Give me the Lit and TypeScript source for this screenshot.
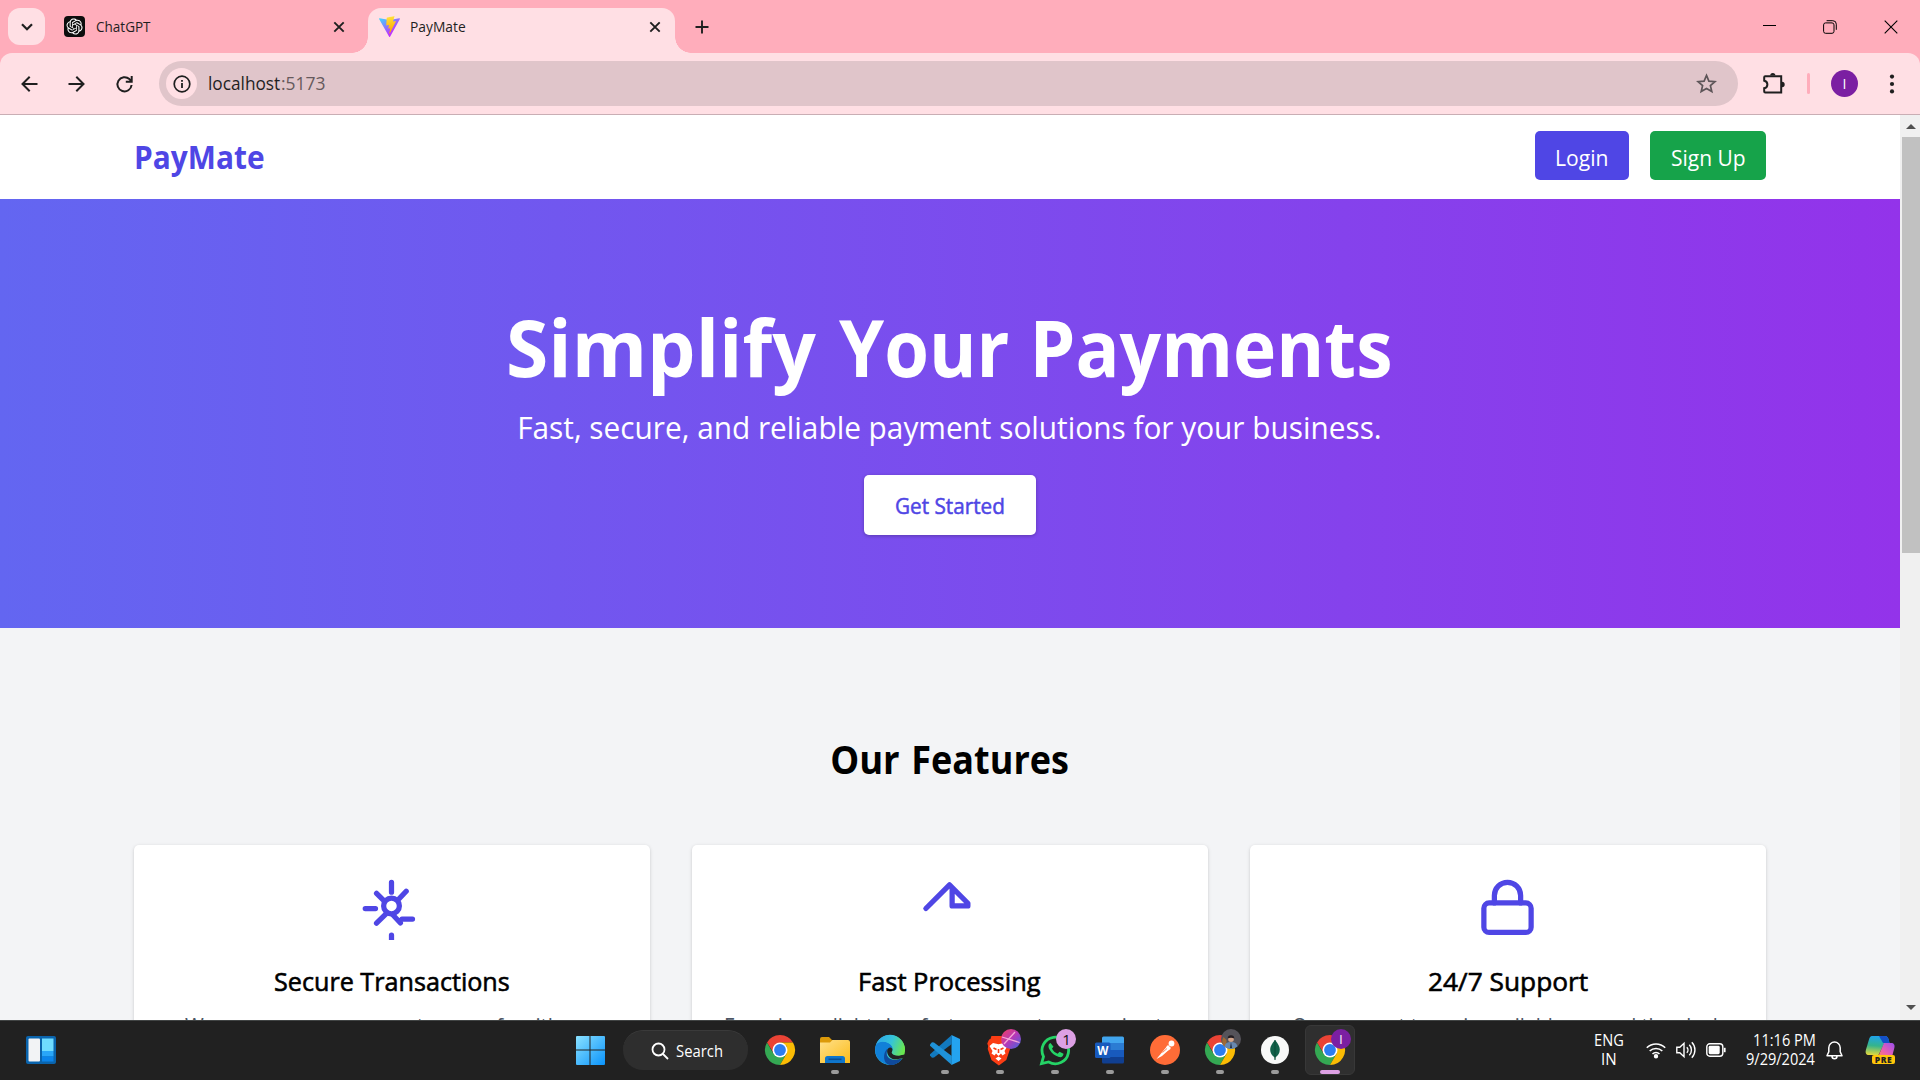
import { LitElement, html, css, svg } from "lit";
import { customElement, property } from "lit/decorators.js";

/** One line of text whose glyphs are scaled horizontally to span a given width. */
@customElement("fit-text")
class FitText extends LitElement {
  @property({ type: Number }) w = 0;
  @property() text = "";
  static styles = css`
    :host { display: inline-block; white-space: nowrap; text-align: left; flex: none; }
    .t { display: block; width: max-content; transform-origin: 0 50%; }
  `;
  firstUpdated() {
    const el = this.renderRoot.querySelector(".t") as HTMLElement;
    const cs = getComputedStyle(el);
    const ctx = document.createElement("canvas").getContext("2d")!;
    ctx.font = `${cs.fontWeight} ${cs.fontSize} ${cs.fontFamily}`;
    const m = ctx.measureText(this.text);
    const ink = m.actualBoundingBoxRight + m.actualBoundingBoxLeft;
    this.style.width = `${this.w}px`;
    el.style.transform = `scaleX(${this.w / ink}) translateX(${m.actualBoundingBoxLeft}px)`;
  }
  render() {
    return html`<span class="t">${this.text}</span>`;
  }
}

const base = css`
  :host { display: block; font-family: "Open Sans", "Noto Sans", sans-serif; }
  * { box-sizing: border-box; }
  svg { display: block; flex: none; }
`;

const closeIcon = html`<svg width="12" height="12" viewBox="0 0 12 12" stroke="#1f1f1f" stroke-width="1.9"><path d="M1.3 1.3l9.4 9.4M10.7 1.3l-9.4 9.4"/></svg>`;

@customElement("browser-chrome")
class BrowserChrome extends LitElement {
  static styles = [base, css`
    :host { background: #ffadbb; color: #1f1f1f; }
    .strip { height: 53px; display: flex; align-items: flex-start; padding: 8px 0 0 8px; }
    .search { width: 37px; height: 37px; border-radius: 12px; background: #ffdfe4; display: grid; place-items: center; }
    .tab { height: 37px; display: flex; align-items: center; font-size: 14.6px; }
    .tab.idle { width: 323px; padding: 0 23px 0 19px; }
    .tab.active { width: 307px; height: 45px; padding: 0 14.5px 8px 11px; background: #ffdfe4; border-radius: 13px 13px 0 0; position: relative; }
    .tab.active::before, .tab.active::after { content: ""; position: absolute; bottom: 0; width: 16px; height: 16px; }
    .tab.active::before { left: -16px; background: radial-gradient(circle at 0 0, transparent 15.5px, #ffdfe4 16px); }
    .tab.active::after { right: -16px; background: radial-gradient(circle at 100% 0, transparent 15.5px, #ffdfe4 16px); }
    .tab .name { margin-left: 11px; flex: 1; padding-bottom: 2px; }
    .plus { margin: 12px 0 0 20px; }
    .win { margin-left: auto; display: flex; align-items: center; height: 37px; gap: 47px; padding-right: 22px; }
    .bar { height: 61px; background: #ffdfe4; border-radius: 12px 12px 0 0; display: flex; align-items: center; padding: 0 20px; }
    .line { height: 1px; background: #c9aeb4; }
    .nav { display: flex; gap: 27px; width: 139px; }
    .omni { width: 1579px; height: 45px; border-radius: 23px; background: #e0c5ca; display: flex; align-items: center; padding: 0 21px 0 7px; font-size: 17.5px; }
    .info { width: 31px; height: 31px; border-radius: 50%; background: #ffdfe4; display: grid; place-items: center; margin-right: 11.5px; }
    .url { display: flex; flex: 1; gap: 2.5px; padding-bottom: 2px; }
    .port { color: #66595c; }
    .ext { margin-left: 24px; }
    .div { width: 3px; height: 21px; border-radius: 2px; background: #ffadbb; margin: 0 21px 0 22px; }
    .ava { width: 27px; height: 27px; border-radius: 50%; background: #7b1fa2; color: #fff; display: grid; place-items: center; font-size: 14px; }
    .dots { margin-left: 31px; }
  `];
  render() {
    return html`
      <div class="strip">
        <div class="search"><svg width="12" height="8" viewBox="0 0 12 8" fill="none" stroke="#1f1f1f" stroke-width="2.2"><path d="M1 1.2l5 5 5-5"/></svg></div>
        <div class="tab idle">
          <svg width="21" height="21" viewBox="0 0 21 21"><rect width="21" height="21" rx="4" fill="#0d0d0d"/><g transform="translate(2.5 2.4) scale(.67)"><path fill="#fff" d="M22.28 9.82a5.98 5.98 0 0 0-.52-4.91 6.05 6.05 0 0 0-6.51-2.9A6.07 6.07 0 0 0 4.98 4.18a5.98 5.98 0 0 0-4 2.9 6.05 6.05 0 0 0 .74 7.1 5.98 5.98 0 0 0 .51 4.91 6.05 6.05 0 0 0 6.52 2.9A5.98 5.98 0 0 0 13.26 24a6.06 6.06 0 0 0 5.77-4.21 5.99 5.99 0 0 0 4-2.9 6.06 6.06 0 0 0-.75-7.07zm-9.02 12.61a4.48 4.48 0 0 1-2.88-1.04l.14-.08 4.78-2.76a.8.8 0 0 0 .39-.68v-6.74l2.02 1.17a.07.07 0 0 1 .04.05v5.58a4.5 4.5 0 0 1-4.49 4.5zM3.6 18.3a4.47 4.47 0 0 1-.54-3.01l.14.08 4.79 2.76a.77.77 0 0 0 .78 0l5.84-3.37v2.33a.08.08 0 0 1-.03.06L9.74 19.95A4.5 4.5 0 0 1 3.6 18.3zM2.34 7.9a4.49 4.49 0 0 1 2.37-1.98V11.6a.77.77 0 0 0 .38.68l5.82 3.35-2.02 1.17a.08.08 0 0 1-.07 0L3.99 14A4.5 4.5 0 0 1 2.34 7.87zm16.6 3.85L13.1 8.36l2.02-1.16a.08.08 0 0 1 .07 0l4.83 2.79a4.49 4.49 0 0 1-.68 8.1v-5.68a.79.79 0 0 0-.4-.66zm2-3.02l-.14-.09-4.77-2.78a.78.78 0 0 0-.79 0L9.41 9.23V6.9a.07.07 0 0 1 .03-.06l4.83-2.79a4.5 4.5 0 0 1 6.68 4.66zM8.3 12.86l-2.02-1.16a.08.08 0 0 1-.04-.06V6.07a4.5 4.5 0 0 1 7.38-3.45l-.14.08-4.78 2.76a.8.8 0 0 0-.39.68zm1.1-2.36L12 9l2.6 1.5v3L12 15l-2.6-1.5z"/></g></svg>
          <span class="name"><fit-text w="54.5" text="ChatGPT"></fit-text></span>${closeIcon}
        </div>
        <div class="tab active">
          <svg width="21" height="21" viewBox="0 0 256 257"><defs><linearGradient id="va" x1="0%" x2="58%" y1="8%" y2="79%"><stop offset="0" stop-color="#41D1FF"/><stop offset="1" stop-color="#BD34FE"/></linearGradient><linearGradient id="vb" x1="43%" x2="50%" y1="2%" y2="89%"><stop offset="0" stop-color="#FFEA83"/><stop offset=".08" stop-color="#FFDD35"/><stop offset="1" stop-color="#FFA800"/></linearGradient></defs><path fill="url(#va)" d="M255.2 37.9L134.9 253c-2.5 4.4-8.9 4.5-11.4.1L.9 38c-2.8-4.8 1.4-10.6 6.8-9.6l120.4 21.5c.8.1 1.6.1 2.3 0l117.9-21.5c5.4-1 9.6 4.8 6.9 9.5z"/><path fill="url(#vb)" d="M185.4 0L96.4 17.5a3.3 3.3 0 0 0-2.6 3l-5.5 92.5a3.3 3.3 0 0 0 4 3.4l24.8-5.7c2.3-.5 4.4 1.5 3.9 3.8l-7.4 36.1c-.5 2.4 1.8 4.5 4.2 3.8l15.3-4.7c2.4-.7 4.6 1.4 4.1 3.8l-11.7 56.7c-.7 3.5 4 5.5 6 2.5l1.3-2 72.5-144.8c1.2-2.4-.9-5.2-3.5-4.7l-25.5 5c-2.4.4-4.4-1.8-3.8-4.1l16.7-57.7c.7-2.3-1.4-4.5-3.8-4.1z"/></svg>
          <span class="name"><fit-text w="54.5" text="PayMate"></fit-text></span>${closeIcon}
        </div>
        <svg class="plus" width="14" height="14" viewBox="0 0 14 14" stroke="#1f1f1f" stroke-width="1.9"><path d="M7 .5v13M.5 7h13"/></svg>
        <div class="win">
          <svg width="13" height="14" viewBox="0 0 13 14" stroke="#000"><path d="M0 5.5h13"/></svg>
          <svg width="14" height="14" viewBox="0 0 14 14" fill="none" stroke="#000"><rect x=".6" y="2.9" width="10.4" height="10.4" rx="2"/><path d="M3.6.7h6.2a3.5 3.5 0 0 1 3.5 3.5v5.6"/></svg>
          <svg width="14" height="14" viewBox="0 0 14 14" stroke="#000" stroke-width="1.1"><path d="M.7.7l12.6 12.6M13.3.7L.7 13.3"/></svg>
        </div>
      </div>
      <div class="bar">
        <div class="nav">
          <svg width="20" height="20" viewBox="0 0 20 20" fill="none" stroke="#1f1f1f" stroke-width="2"><path d="M17.5 10H3M9.7 2.8L2.5 10l7.2 7.2"/></svg>
          <svg width="20" height="20" viewBox="0 0 20 20" fill="none" stroke="#1f1f1f" stroke-width="2"><path d="M1.500 10H16M9.300 2.800l7.200 7.200-7.200 7.200"/></svg>
          <svg width="20" height="20" viewBox="0 0 20 20" fill="none" stroke="#1f1f1f" stroke-width="2"><path d="M17.600 11A7.100 7.100 0 1 1 15.400 5.100l2.200 2.200M17.700 2v5.800h-5.900"/></svg>
        </div>
        <div class="omni">
          <div class="info"><svg width="18" height="18" viewBox="0 0 18 18"><circle cx="9" cy="9" r="7.8" fill="none" stroke="#1f1f1f" stroke-width="1.7"/><path d="M9 8v5M9 4.9v1.9" stroke="#1f1f1f" stroke-width="1.8"/></svg></div>
          <div class="url"><fit-text w="71" text="localhost"></fit-text><fit-text class="port" w="42.5" text=":5173"></fit-text></div>
          <svg width="21" height="21" viewBox="0 0 21 21" fill="none" stroke="#5d5558" stroke-width="1.7"><path d="M10.500 2.400l2.400 5.700 6.100.5-4.600 4 1.400 6-5.300-3.200-5.300 3.200 1.400-6-4.600-4 6.100-.5z"/></svg>
        </div>
        <svg class="ext" width="23" height="23" viewBox="0 0 23 23"><path d="M3.200 4.300h16v16.200h-16a1 1 0 0 1-1-1v-3.300a3.800 3.800 0 0 0 0-7.500V5.300a1 1 0 0 1 1-1z" fill="none" stroke="#1f1f1f" stroke-width="2"/><path d="M8.200 3.600a2.600 2.600 0 0 1 5.200 0zM20 9.800a2.700 2.700 0 0 1 0 5.400z" fill="#1f1f1f"/></svg>
        <div class="div"></div>
        <div class="ava">I</div>
        <svg class="dots" width="6" height="20" viewBox="0 0 6 20" fill="#1f1f1f"><circle cx="3" cy="2.600" r="2.100"/><circle cx="3" cy="10" r="2.100"/><circle cx="3" cy="17.400" r="2.100"/></svg>
      </div>
      <div class="line"></div>`;
  }
}

const cards = [
  {
    title: "Secure Transactions", tw: 234.3, body: "We ensure your payments are safe with our", bw: 414,
    icon: svg`<circle cx="12" cy="11" r="3"/><path d="M12 2v3.800M2 12h3.900M16 16h4M12 22.100v4M14.900 8.300l2.700-2.900M9.100 9l-2.800-2.800M10.100 13.900l-3.800 3.700M12.400 14.300l3 3.200"/>`,
  },
  {
    title: "Fast Processing", tw: 180.3, body: "Experience lightning-fast payment processing to", bw: 448,
    icon: svg`<path d="M3 12l9-9 7 7v1h-6V4"/>`,
  },
  {
    title: "24/7 Support", tw: 158.8, body: "Our support team is available around the clock", bw: 430,
    icon: svg`<rect x="3" y="9.900" width="18" height="11.200" rx="2"/><path d="M7 9.900V7a5 5 0 0 1 10 0v2.900"/>`,
  },
];

@customElement("paymate-page")
class PaymatePage extends LitElement {
  static styles = [base, css`
    :host { height: 905px; display: flex; overflow: hidden; background: #f3f4f6; color: #000; }
    .page { width: 1900px; }
    .head { height: 84px; background: #fff; display: flex; align-items: center; padding: 0 134px; }
    .brand { font-size: 31.5px; font-weight: 700; color: #4f46e5; flex: 1; line-height: 42px; padding: 0 0 0 1.5px; }
    .btn { height: 49px; margin-bottom: 3px; border-radius: 5px; color: #fff; font-size: 21px; display: flex; justify-content: center; padding-top: 3.5px; line-height: 46px; }
    .login { width: 94px; background: #4f46e5; margin-right: 21px; }
    .sign { width: 116px; background: #16a34a; }
    .hero { height: 429px; padding-top: 108px; display: flex; flex-direction: column; align-items: center; color: #fff; background: linear-gradient(to right, #6366f1, #9333ea); }
    .h1 { display: flex; font-size: 78.75px; line-height: 80px; font-weight: 700; }
    .h1 .w2 { margin: 0 28.1px 0 22.3px; }
    .sub { font-size: 31.5px; line-height: 40px; margin: 20px 0 28px; }
    .cta { width: 172px; height: 60px; border-radius: 5px; background: #fff; color: #4f46e5; font-size: 21px; -webkit-text-stroke: .5px #4f46e5; line-height: 58px; padding-top: 2px; text-align: center; box-shadow: 0 1px 4px rgba(0,0,0,.14), 0 1px 3px rgba(0,0,0,.12); }
    .feat { padding: 107px 134px 0; }
    .h2 { display: flex; justify-content: center; gap: 14.3px; font-size: 39.4px; line-height: 48px; font-weight: 700; margin-bottom: 62px; }
    .grid { display: grid; grid-template-columns: repeat(3, 1fr); gap: 42px; }
    .card { height: 260px; background: #fff; border-radius: 5px; padding-top: 32.4px; display: flex; flex-direction: column; align-items: center; box-shadow: 0 1px 4px rgba(0,0,0,.1), 0 1px 3px rgba(0,0,0,.08); }
    .card svg { margin-right: 1.4px; }
    .h3 { font-size: 26.25px; line-height: 36px; -webkit-text-stroke: .6px #000; margin: 22.6px 0 10.6px; }
    .p { font-size: 21px; line-height: 32px; color: #4b5563; }
    .scroll { width: 20px; background: #f0f0f0; display: flex; flex-direction: column; align-items: center; padding: 9px 0 10px; }
    .thumb { width: 18px; height: 416px; background: #c1c1c1; margin: 8px 0 auto 2px; }
    .arr { margin-left: 2px; }
  `];
  render() {
    return html`
      <div class="page">
        <div class="head">
          <div class="brand"><fit-text w="128" text="PayMate"></fit-text></div>
          <div class="btn login"><fit-text w="50.5" text="Login"></fit-text></div>
          <div class="btn sign"><fit-text w="72.8" text="Sign Up"></fit-text></div>
        </div>
        <div class="hero">
          <div class="h1"><fit-text w="307" text="Simplify"></fit-text><fit-text class="w2" w="169.6" text="Your"></fit-text><fit-text w="354.5" text="Payments"></fit-text></div>
          <div class="sub"><fit-text w="859.5" text="Fast, secure, and reliable payment solutions for your business."></fit-text></div>
          <div class="cta"><fit-text w="108" text="Get Started"></fit-text></div>
        </div>
        <div class="feat">
          <div class="h2"><fit-text w="67.7" text="Our"></fit-text><fit-text w="154.4" text="Features"></fit-text></div>
          <div class="grid">
            ${cards.map(c => html`<div class="card">
              <svg width="63" height="63" viewBox="0 0 24 24" fill="none" stroke="#4f46e5" stroke-width="2" stroke-linecap="round" stroke-linejoin="round">${c.icon}</svg>
              <div class="h3"><fit-text w=${c.tw} text=${c.title}></fit-text></div>
              <div class="p"><fit-text w=${c.bw} text=${c.body}></fit-text></div>
            </div>`)}
          </div>
        </div>
      </div>
      <div class="scroll">
        <svg class="arr" width="10" height="5" viewBox="0 0 10 5"><path d="M0 5l5-5 5 5z" fill="#505050"/></svg>
        <div class="thumb"></div>
        <svg class="arr" width="10" height="5" viewBox="0 0 10 5"><path d="M0 0l5 5 5-5z" fill="#505050"/></svg>
      </div>`;
  }
}

const chrome = svg`<path fill="#ea4335" d="M2 7.500A15 15 0 0 1 28 7.500H15L9 18.700z"/><path fill="#34a853" d="M2 7.500A15 15 0 0 0 15 30l6.500-11.200L15 22.500 8.500 18.700z"/><path fill="#fbbc04" d="M28 7.500A15 15 0 0 1 15 30l6.500-11.300V11L15 7.500z"/><circle cx="15" cy="15" r="7.500" fill="#fff"/><circle cx="15" cy="15" r="5.900" fill="#2d7df0"/>`;

const apps = [
  { run: "", icon: chrome },
  { run: "run", icon: svg`<path d="M0 4a2 2 0 0 1 2-2h7l3 3h6v10H0z" fill="#dc9a0a"/><path d="M0 7.500h10l2.500-2.400H28a2 2 0 0 1 2 2V28H0z" fill="url(#fold)"/><path d="M5 28v-4.500a2.500 2.500 0 0 1 2.500-2.500h15a2.500 2.500 0 0 1 2.500 2.500V28z" fill="#0f76cc"/><path d="M8.500 24.300h13" stroke="#0a4f94" stroke-width="1.600"/>` },
  { run: "", icon: svg`<circle cx="15" cy="15" r="15" fill="url(#edge)"/><path d="M.2 13C1 7 6 5.500 11 7c5 1.500 7.500 5 6.500 8.500-1-2-4-2.500-5.500.5-2 4 1 9.500 7 10 3.500.3 6-1 8.300-2.500A15 15 0 0 1 .2 13z" fill="#1180d8"/><path d="M12 16c-1.500 4 1.500 8.500 7 8.700 3 .1 5.500-.7 8.500-1.500C24.500 28 20 30.300 14.500 30 8 28.500 7.500 18.500 12 14z" fill="#0f4a9c"/><path d="M16.800 17.800c1-1.300 1-3.300.3-4.300-1.500-2-5-.5-5 2.700 0 3.500 3 7.500 7 8 3.500.4 6-.5 8.400-1.200a2 2 0 0 0 2-3.500c-3 .9-9 2-12.700-1.700z" fill="#222"/><path d="M16.800 17.800c-.5-.7 2.300-2.600.6-6C14 5.500 4 5.500 1 9.500A15 15 0 0 1 30 14.500c0 5-5 6.500-9 6-2.500-.4-4-1.500-4.200-2.700z" fill="url(#edge)"/>` },
  { run: "run", icon: svg`<path d="M21.500 0L30 4v22l-8.500 4z" fill="#24a3f0"/><path d="M21.800 0v9L4 22.500 2 22.700 0 20.500v-1.300z" fill="#1279be"/><path d="M21.800 30v-9L4 7.500 2 7.300 0 9.500v1.300z" fill="#1f92d8"/>` },
  { run: "run", icon: svg`<path d="M8 1h13l3 3 2.500.5 2 4-1 2.500.5 3-4 11-8 5.500-8-5.500-4-11 .5-3-1-2.500 2-4L7 4z" transform="translate(-1 0) scale(.93 1)" fill="#fb3d14"/><path d="M8 8l5.500 1.200L19 8l3.500 3-3 5 1 2.500-3 2-1.500-2-2.500 2.500-2.500-2.500-1.500 2-3-2 1-2.500-3-5zM13.500 21.500l3 2-3 2.500-3-2.500z" fill="#fff"/><path d="M8.500 13l3 1.500M18.500 13l-3 1.500M13.500 14v4" stroke="#fb3d14" stroke-width="1.600"/><circle cx="26" cy="4" r="10" fill="url(#ball)"/><path d="M17 2l17.500 5.500M19 9l11-12" stroke="#f4a6d8" stroke-width="1.300"/>` },
  { run: "run", icon: svg`<path d="M1.500 28.600l2-7A13.300 13.300 0 1 1 8.700 27z" fill="none" stroke="#25d366" stroke-width="2.800"/><path d="M10.500 8c-2.500 1-2.500 4-.8 6.800 2 3.500 5 6 9.300 7.300 2.500.7 4.500-1 4.500-3.300l-4-2-1.800 2c-2.700-1-4.500-3-5.700-5.300l1.500-1.800z" fill="#25d366"/><circle cx="26" cy="4" r="10" fill="#dda0e4"/><text x="26.500" y="9.500" text-anchor="middle" font-size="15" fill="#111">1</text>` },
  { run: "run", icon: svg`<path d="M7 3a1.500 1.500 0 0 1 1.500-1.500h19A1.500 1.500 0 0 1 29 3v5H7z" fill="#41a5ee"/><path d="M7 8h22v7H7z" fill="#2b7cd3"/><path d="M7 15h22v7H7z" fill="#185abd"/><path d="M7 22h22v5a1.500 1.500 0 0 1-1.500 1.500h-19A1.500 1.500 0 0 1 7 27z" fill="#103f91"/><rect x="0" y="7.500" width="15.500" height="15.500" rx="1.500" fill="#185abd"/><text x="7.700" y="19.500" text-anchor="middle" font-size="11.500" font-weight="700" fill="#fff">W</text>` },
  { run: "run", icon: svg`<circle cx="15" cy="15" r="15" fill="#ff6c37"/><path d="M18 10l3 3-9 8-5.500 3z" fill="#fff"/><path d="M17 10.500l3.500 3.500-5 3z" fill="#fff"/><circle cx="21.500" cy="8.500" r="2.900" fill="#fff"/><path d="M12.500 17.500l4.500-4" stroke="#ff6c37" stroke-width=".8"/>` },
  { run: "run", icon: svg`${chrome}<circle cx="26" cy="4" r="10" fill="#55535a"/><path d="M18 10a9 9 0 0 1 .5-8l3 3v8z" fill="#a06a35"/><circle cx="26" cy="4" r="2.900" fill="#d3a58b"/><path d="M22.700 3.500a3.300 3.300 0 0 1 6.600 0c-2-1-4.600-1-6.600 0z" fill="#231d22"/><path d="M19.500 11.500c1-4 4-4.500 6.500-4.500s5.500.5 6.500 4.500a10 10 0 0 1-13 0z" fill="#6788b0"/><path d="M26 7l-1 6h2z" fill="#222b40"/>` },
  { run: "run", icon: svg`<circle cx="15" cy="15" r="14" fill="#f8f9f8"/><path d="M15 5c3 3.500 4.800 6.500 4.800 9.500 0 4-2 6-4.300 7.800L15 25l-.5-2.700c-2.300-1.800-4.300-3.800-4.300-7.800 0-3 1.800-6 4.800-9.500z" fill="#116149"/><path d="M15 5v20" stroke="#0a4a36"/>` },
  { run: "on", icon: svg`${chrome}<circle cx="26" cy="4" r="10" fill="#7b1fa2"/><text x="26" y="8.500" text-anchor="middle" font-size="12" fill="#fff">I</text>` },
];

@customElement("task-bar")
class TaskBar extends LitElement {
  static styles = [base, css`
    :host { box-sizing: border-box; height: 60px; background: #212121; border-top: 1px solid #414444; color: #fff; display: flex; align-items: center; padding: 0 24px 1px 26px; }
    .left { width: 549px; }
    .search { width: 125px; height: 40px; border-radius: 20px; background: #2e2e2e; border-top: 1px solid #3a3a3a; margin: 0 7px 0 18px; display: flex; align-items: center; gap: 7px; padding-left: 28px; font-size: 15.5px; line-height: 20px; }
    .app { width: 50px; height: 50px; margin-right: 5px; border-radius: 6px; display: flex; flex-direction: column; align-items: center; justify-content: flex-start; padding-top: 10px; }
    .app svg { overflow: visible; }
    .app.on { background: #2f2f2f; border: 1px solid #383838; padding-top: 9px; }
    .ind { width: 8px; height: 4px; border-radius: 2px; background: #9b9b9b; margin-top: 5px; }
    .on .ind { width: 20px; background: #dda0e4; }
    .idle .ind { visibility: hidden; }
    .tray { margin-left: auto; display: flex; align-items: center; font-size: 15.5px; line-height: 19.5px; }
    .lang { display: flex; flex-direction: column; align-items: center; margin-right: 23px; }
    .clock { display: flex; flex-direction: column; align-items: flex-end; margin: 0 11px 0 20px; }
    .st { margin-right: 10px; }
    .pre { margin-left: 22px; }
  `];
  render() {
    return html`
      <div class="left">
        <svg width="30" height="28" viewBox="0 0 30 28"><rect width="30" height="28" rx="2" fill="#0a64ad"/><rect x="2.500" y="2.500" width="11.500" height="23" rx="1" fill="#f2f3f5"/><path d="M16 2.500h11.500V15H16z" fill="#6fdcff"/><path d="M16 15h11.500v5.500H16z" fill="#29a6f8"/><path d="M16 20.500h11.500v5H16z" fill="#0b84ea"/></svg>
      </div>
      <svg width="30" height="30" viewBox="0 0 30 30"><defs><linearGradient id="w" x1="0" y1="0" x2="1" y2="1"><stop stop-color="#8ae1ff"/><stop offset="1" stop-color="#0a93fb"/></linearGradient></defs><path fill="url(#w)" d="M2 1h12.500v13.500H1V2a1 1 0 0 1 1-1zM15.500 1H29a1 1 0 0 1 1 1v12.500H15.500zM1 15.500h13.500V30H2a1 1 0 0 1-1-1zM15.500 15.500H30V29a1 1 0 0 1-1 1H15.500z"/></svg>
      <div class="search"><svg width="18" height="18" viewBox="0 0 18 18" fill="none" stroke="#fff" stroke-width="1.800"><circle cx="7.500" cy="7.500" r="6"/><path d="M12 12l5 5"/></svg><fit-text w="46.5" text="Search"></fit-text></div>
      ${apps.map(a => html`<div class="app ${a.run || "idle"}"><svg width="30" height="30" viewBox="0 0 30 30"><defs><linearGradient id="fold" x1="0" y1="0" x2="1" y2="1"><stop stop-color="#ffe08a"/><stop offset="1" stop-color="#fcbc19"/></linearGradient><linearGradient id="edge" x1="0" y1=".3" x2="1" y2=".6"><stop stop-color="#2fa8e8"/><stop offset=".5" stop-color="#35c4d8"/><stop offset="1" stop-color="#6be84c"/></linearGradient><linearGradient id="ball" x1="0" y1="0" x2="1" y2="1"><stop stop-color="#f2405f"/><stop offset=".5" stop-color="#b638b8"/><stop offset="1" stop-color="#3f66e0"/></linearGradient></defs>${a.icon}</svg><div class="ind"></div></div>`)}
      <div class="tray">
        <div class="lang"><fit-text w="28.5" text="ENG"></fit-text><fit-text w="14" text="IN"></fit-text></div>
        <svg class="st" width="20" height="17" viewBox="0 0 20 17" fill="none" stroke="#fff" stroke-width="1.600"><path d="M.8 5.800a13 13 0 0 1 18.400 0M3.700 9a9 9 0 0 1 12.600 0M6.500 12a5 5 0 0 1 7 0"/><circle cx="10" cy="14.300" r="1.400" fill="#fff"/></svg>
        <svg class="st" width="20" height="18" viewBox="0 0 20 18" fill="none" stroke="#fff" stroke-width="1.400"><path d="M.8 6.300h3L8 2.300v13.400l-4.200-4h-3zM10.800 6.200a4 4 0 0 1 0 5.600M13.300 3.800a7.400 7.400 0 0 1 0 10.400M15.800 1.300a11 11 0 0 1 0 15.400"/></svg>
        <svg width="20" height="14" viewBox="0 0 20 14"><rect x=".8" y=".8" width="16" height="12.400" rx="3" fill="none" stroke="#fff" stroke-width="1.400"/><rect x="2.700" y="2.800" width="11" height="8.400" rx="1.400" fill="#fff"/><path d="M18.700 4.800v4.400" stroke="#fff" stroke-width="1.800"/></svg>
        <div class="clock"><fit-text w="61" text="11:16 PM"></fit-text><fit-text w="69" text="9/29/2024"></fit-text></div>
        <svg width="17" height="19" viewBox="0 0 17 19" fill="none" stroke="#fff" stroke-width="1.500" stroke-linejoin="round"><path d="M8.500 1a5.700 5.700 0 0 1 5.700 5.700v4l1.800 4H1l1.800-4v-4A5.700 5.700 0 0 1 8.500 1zM6 15.200a2.500 2.500 0 0 0 5 0"/></svg>
        <svg class="pre" width="31" height="30" viewBox="0 0 31 30"><defs><linearGradient id="c1" x1=".3" y1="0" x2=".2" y2="1"><stop stop-color="#1fa4ea"/><stop offset=".5" stop-color="#35b48c"/><stop offset="1" stop-color="#e6d83c"/></linearGradient><linearGradient id="c2" x1="1" y1="0" x2="0" y2="1"><stop stop-color="#9a4ff0"/><stop offset=".6" stop-color="#ea60b0"/><stop offset="1" stop-color="#f98a5c"/></linearGradient></defs><path d="M7 1h13c2 0 3 1.500 3.500 3l1 4h-5l-4 8-2 4H4c-3 0-4-2-3-5.500l3-10C4.600 2.500 5.500 1 7 1z" fill="url(#c1)"/><path d="M14 1h6c2 0 3 1.500 3.500 3l1 4H18z" fill="#1450c8"/><path d="M19 8h7c3 0 4 2 3.300 5L27 22H13z" fill="url(#c2)"/><rect x="7" y="20" width="23" height="9" rx="2" fill="#ffc60a"/><text x="18.500" y="27.500" text-anchor="middle" font-size="8.500" font-weight="800" letter-spacing=".5" fill="#222">PRE</text></svg>
      </div>`;
  }
}

@customElement("app-root")
class AppRoot extends LitElement {
  static styles = css`
    :host { display: flex; flex-direction: column; width: 1920px; height: 1080px; overflow: hidden; }
    browser-chrome, paymate-page, task-bar { flex: none; }
  `;
  render() {
    return html`<browser-chrome></browser-chrome><paymate-page></paymate-page><task-bar></task-bar>`;
  }
}
